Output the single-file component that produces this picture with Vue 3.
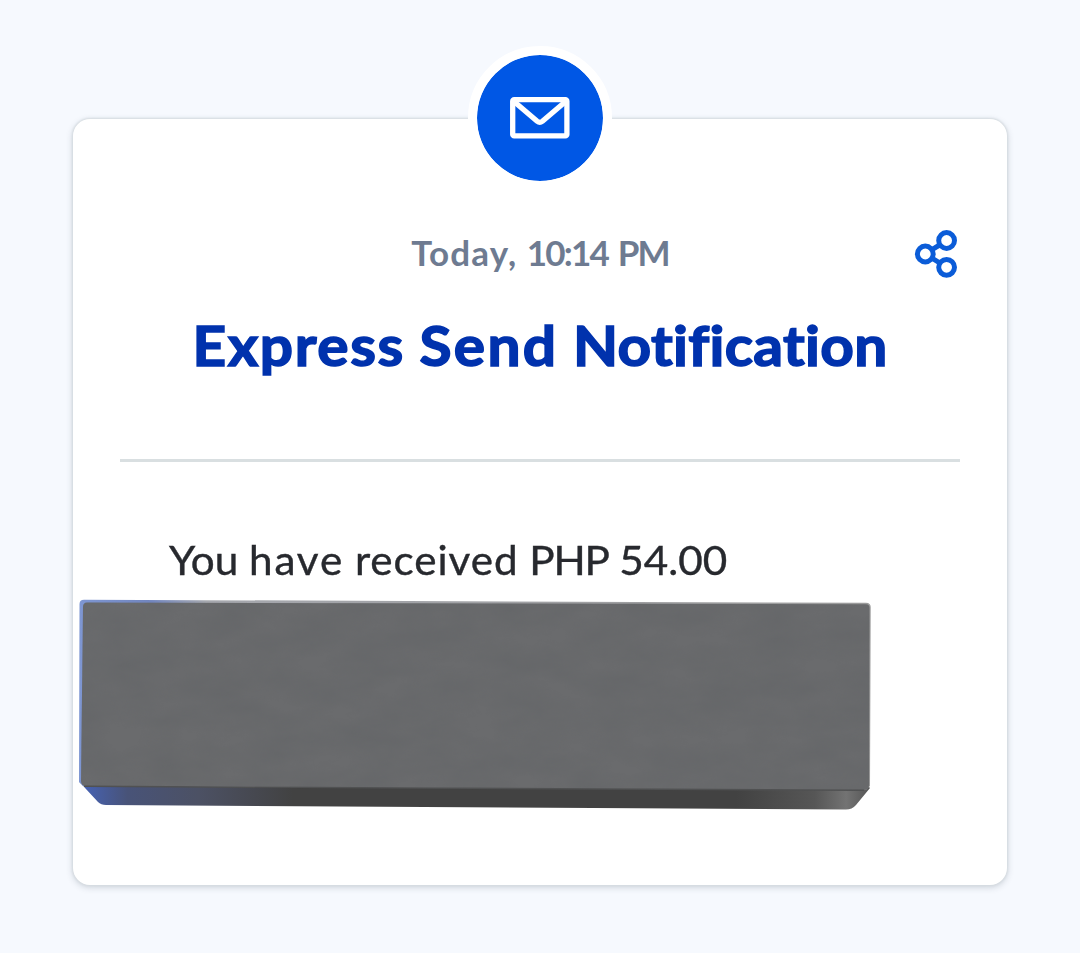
<template>
  <main class="page">
    <article class="card">
      <div class="badge">
        <svg width="60" height="42" viewBox="0 0 60 42" fill="none" stroke="#fff" stroke-width="5.3" stroke-linejoin="round">
          <rect x="2.7" y="2.7" width="54.2" height="36.2" rx="1.5" />
          <path d="M4 4.5 27.2 24.3Q29.8 26.4 32.4 24.3L55.6 4.5" />
        </svg>
      </div>

      <header class="meta">
        <time class="date">Today, <span class="time">10:14</span> <span class="period">PM</span></time>
        <button class="share" type="button" aria-label="Share">
          <svg width="44" height="50" viewBox="0 0 44 50" fill="none" stroke="#0b5cd8" stroke-width="5">
            <circle cx="11.3" cy="25" r="7.9" />
            <circle cx="32.6" cy="11.5" r="7.9" />
            <circle cx="32.6" cy="38.3" r="7.9" />
            <path d="M18 20.7 25.6 16M18 29.2 25.6 33.8" />
          </svg>
        </button>
      </header>

      <h1 class="title"><span class="express">Express</span> <span class="send">Send</span> Notification</h1>
      <hr class="divider" />
      <p class="message">You <span class="have">have</span> <span class="received">received</span> <span class="currency">PHP</span> 54.00</p>

      <svg class="block" width="794" height="214" viewBox="78 598 794 214">
        <defs>
          <linearGradient id="side" x1="80" x2="870" y1="0" y2="0" gradientUnits="userSpaceOnUse">
            <stop offset="0" stop-color="#4663b8" />
            <stop offset=".06" stop-color="#485378" />
            <stop offset=".15" stop-color="#4c5164" />
            <stop offset=".27" stop-color="#424242" />
            <stop offset=".83" stop-color="#424242" />
            <stop offset=".93" stop-color="#565656" />
            <stop offset=".97" stop-color="#737373" />
            <stop offset="1" stop-color="#555" />
          </linearGradient>
          <linearGradient id="rim" x1="80" x2="870" y1="0" y2="0" gradientUnits="userSpaceOnUse">
            <stop offset="0" stop-color="#7e96d2" />
            <stop offset=".09" stop-color="#7185be" />
            <stop offset=".16" stop-color="#a5a7ad" />
            <stop offset="1" stop-color="#9b9b9b" />
          </linearGradient>
          <filter id="grain" x="0" y="0" width="100%" height="100%" color-interpolation-filters="sRGB">
            <feTurbulence type="fractalNoise" baseFrequency=".02 .04" numOctaves="4" seed="4" />
            <feColorMatrix values="0 0 0 0 .37  0 0 0 0 .38  0 0 0 0 .39  .6 0 0 0 -.16" />
            <feComposite in2="SourceGraphic" operator="in" />
          </filter>
        </defs>
        <path d="M79.5 782 98 802Q101 805 106 805L846 809.5Q852 809.5 856 805L870 788 866 784Z" fill="url(#side)" />
        <path d="M84 599.7 866 602.8Q870.7 603 870.7 607L870 786 866 790 83 786 79 782 79.5 604Q79.5 599.7 84 599.7Z" fill="url(#rim)" />
        <path :d="face" fill="#6a6b6d" />
        <path :d="face" fill="#6a6b6d" filter="url(#grain)" />
        <path d="M84 786.3 864 790.3" stroke="#505152" stroke-width="1.4" />
      </svg>
    </article>
  </main>
</template>

<script setup>
// front side of the grey block
const face = 'M87 602.5 866 604.3Q869.5 604.3 869.5 608L869 785Q869 790 864 790L86 786Q81 786 81 781L83 607Q83 602.5 87 602.5Z'
</script>

<style>
body { margin: 0; background: #f6f9fe; }
</style>

<style scoped>
.page {
  box-sizing: border-box;
  min-height: 953px;
  padding: 119px 73px 68px;
  background: #f6f9fe;
  font-family: Lato, 'Open Sans', sans-serif;
  font-variant-ligatures: none;
}
.card {
  position: relative;
  box-sizing: border-box;
  height: 766px;
  padding-top: 110px;
  border-radius: 17px;
  background: #fff;
  box-shadow: 0 0 2px 1px #d6dce1, 0 2px 7px rgba(40, 55, 75, .22);
}
.badge {
  position: absolute;
  top: -73px;
  left: 50%;
  display: flex;
  align-items: center;
  justify-content: center;
  box-sizing: border-box;
  width: 144px;
  height: 144px;
  border: 9px solid #fff;
  border-radius: 50%;
  background: #0057e5;
  background-clip: padding-box;
  transform: translateX(-50%);
}
.meta {
  display: grid;
  grid-template-columns: 1fr auto 1fr;
  align-items: center;
  height: 50px;
  padding: 0 49px;
}
.date {
  grid-column: 2;
  height: 50px;
  color: #6e7b91;
  font-size: 35px;
  font-weight: 700;
  letter-spacing: 1.1px;
  line-height: 47px;
  white-space: nowrap;
}
.time { letter-spacing: -1.8px; }
.period { letter-spacing: -1.8px; }
.share {
  justify-self: end;
  height: 50px;
  padding: 0;
  border: 0;
  background: none;
}
.share svg { display: block; }
.title {
  height: 70px;
  margin: 30px 0 0;
  color: #0032ad;
  font-size: 55px;
  font-weight: 700;
  letter-spacing: .3px;
  line-height: 72px;
  text-align: center;
  white-space: nowrap;
  -webkit-text-stroke: 1.5px #0032ad;
  stroke-linejoin: round;
  transform: scaleX(1.065);
}
.express { letter-spacing: 1.5px; }
.send { letter-spacing: 2.2px; }
.divider {
  height: 3px;
  margin: 80px 47px 0;
  border: 0;
  background: #d9dfe1;
}
.message {
  height: 60px;
  margin: 68px 0 0 96px;
  color: #27292e;
  font-size: 41px;
  line-height: 60px;
  white-space: nowrap;
  -webkit-text-stroke: .4px #27292e;
  transform: scaleX(1.03);
  transform-origin: left;
}
.have { letter-spacing: 1.8px; }
.received { letter-spacing: .9px; }
.currency { letter-spacing: -1.2px; }
.block {
  display: block;
  margin: 8px 0 0 5px;
}
</style>
